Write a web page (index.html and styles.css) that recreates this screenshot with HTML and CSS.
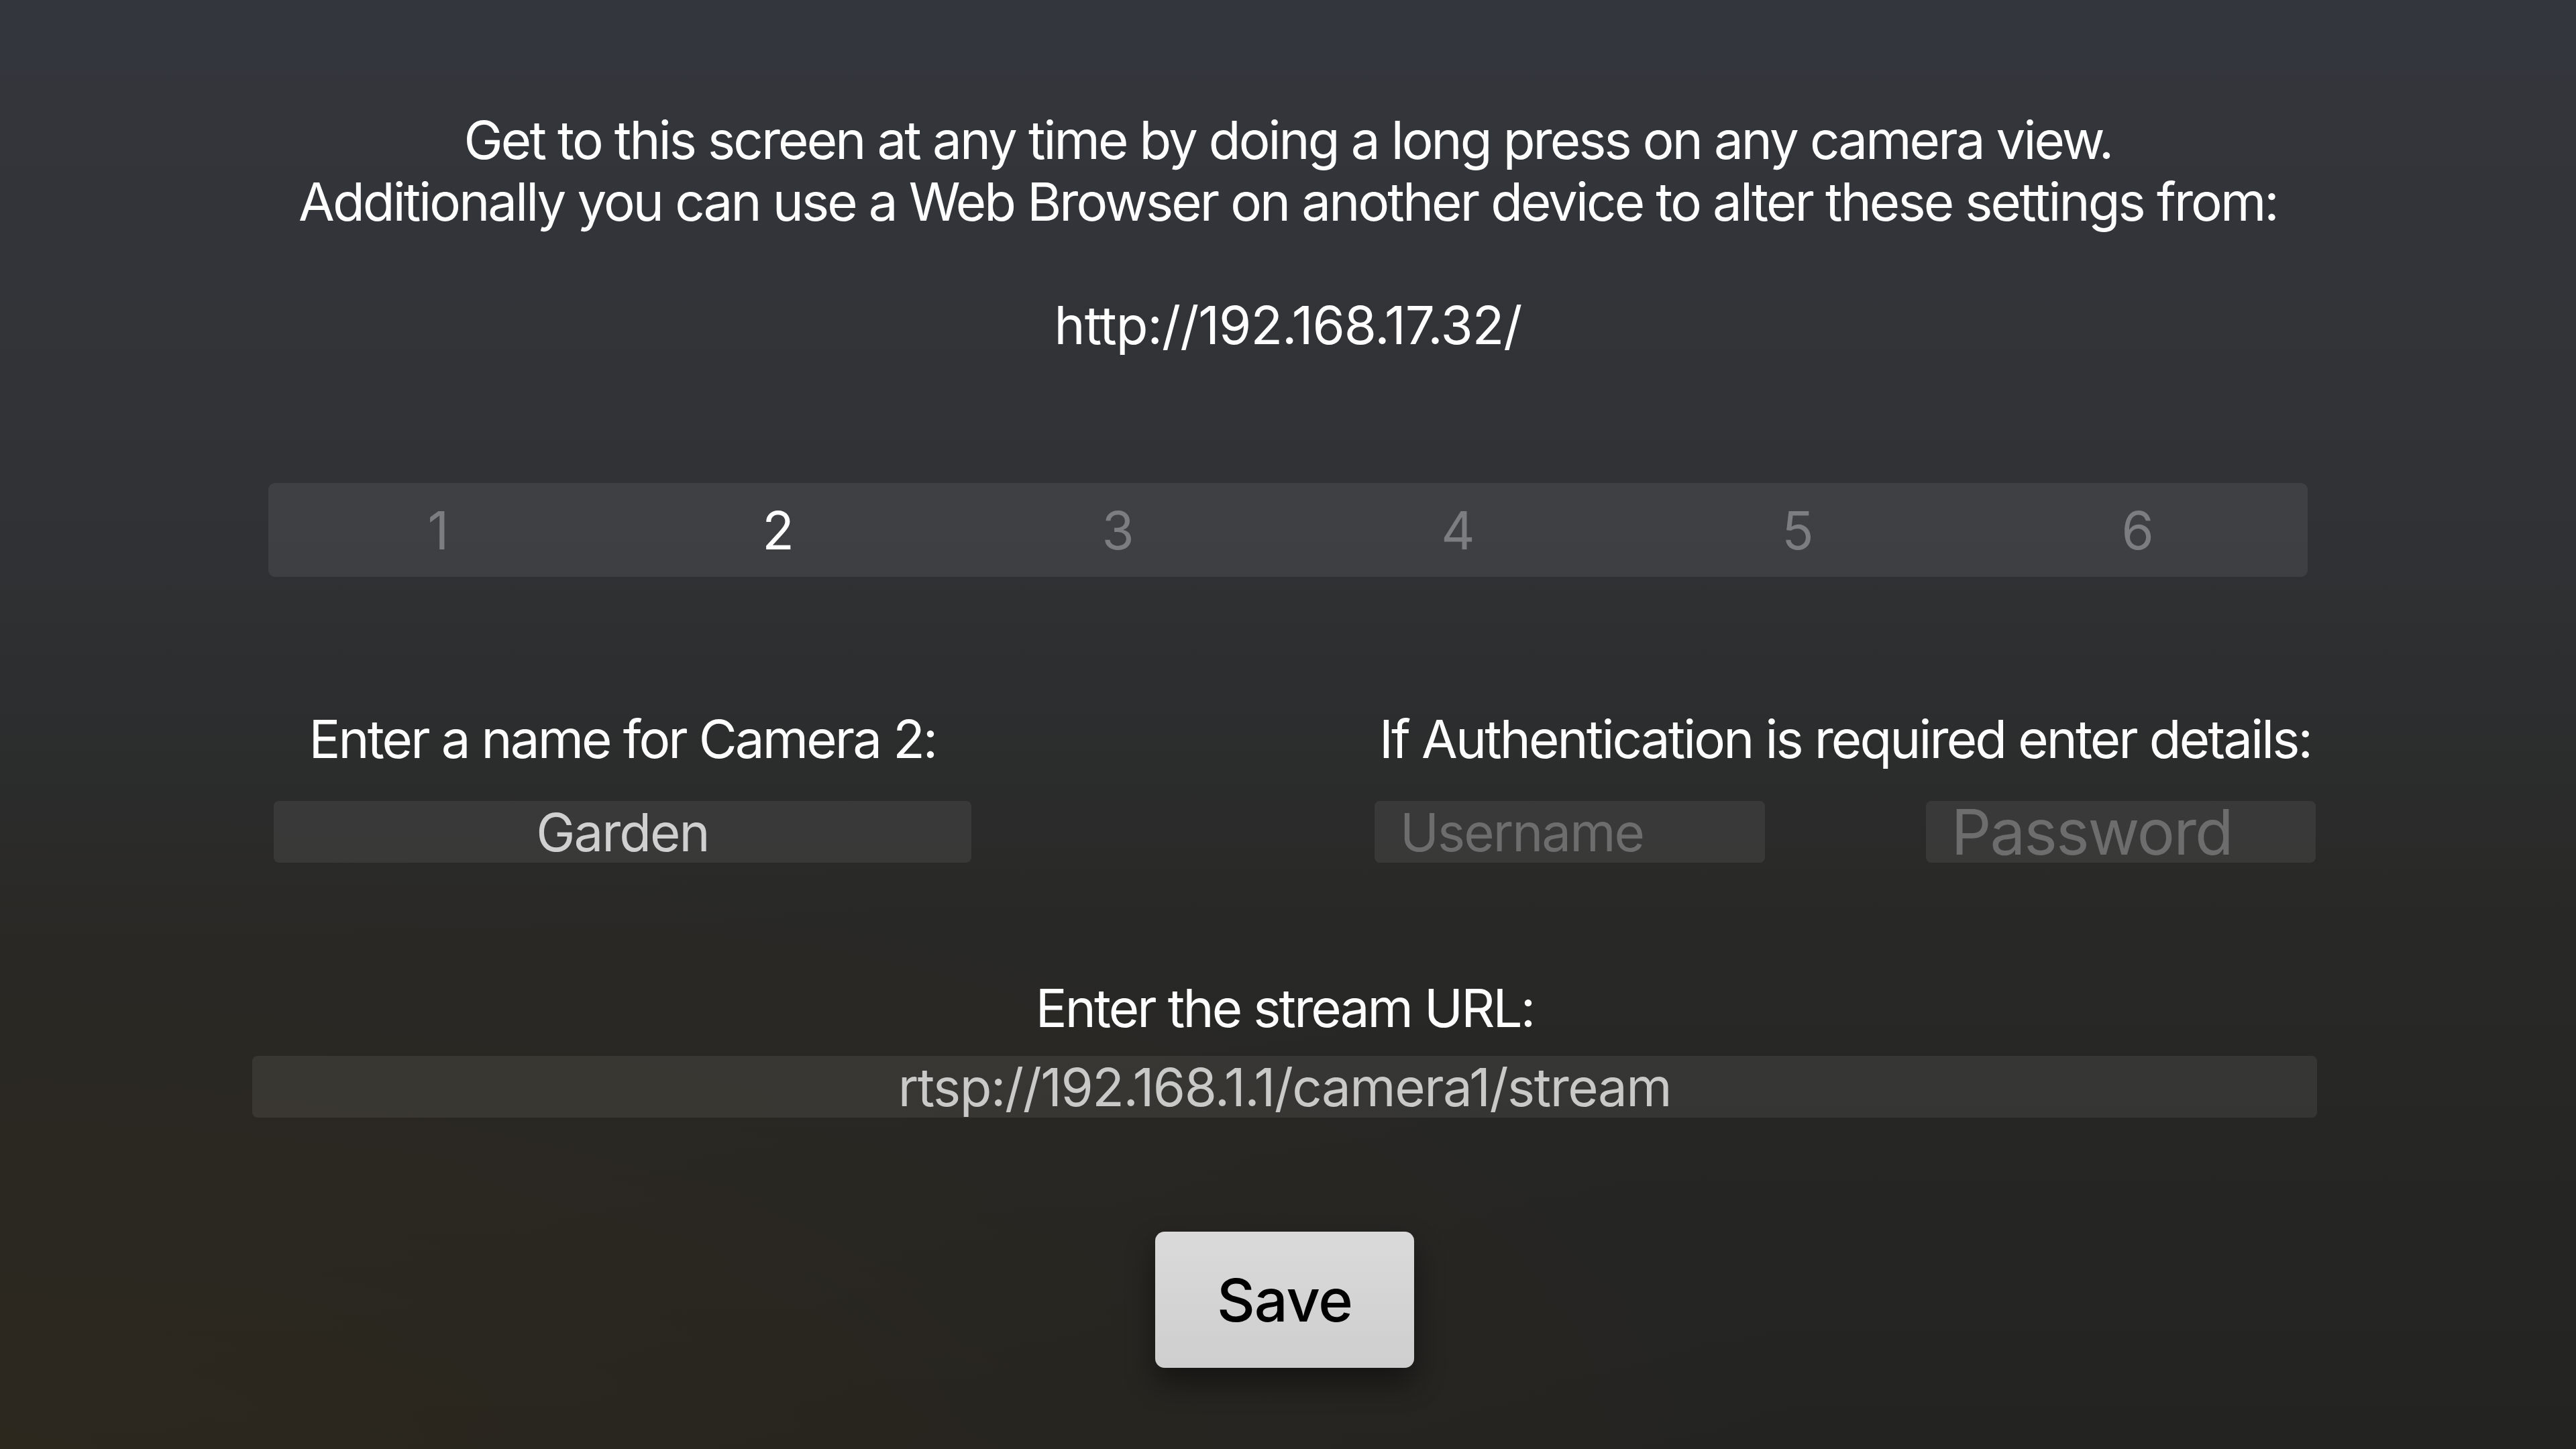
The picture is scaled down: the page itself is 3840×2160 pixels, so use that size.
FILE: index.html
```html
<!DOCTYPE html>
<html lang="en">
<head>
    <meta charset="UTF-8">
    <meta name="viewport" content="width=device-width, initial-scale=1.0">
    <title>Camera Settings</title>
    <link rel="stylesheet" href="styles.css">
</head>
<body>
    <div class="intro">
        <p>Get to this screen at any time by doing a long press on any camera view.<br>
        Additionally you can use a Web Browser on another device to alter these settings from:</p>
        <p class="address">http://192.168.17.32/</p>
    </div>

    <div class="tabs">
        <span class="tab">1</span>
        <span class="tab selected">2</span>
        <span class="tab">3</span>
        <span class="tab">4</span>
        <span class="tab">5</span>
        <span class="tab">6</span>
    </div>

    <div class="form">
        <div class="row">
            <div class="nameCol">
                <p class="label">Enter a name for Camera 2:</p>
                <input class="field" type="text" value="Garden">
            </div>
            <div class="authCol">
                <p class="label">If Authentication is required enter details:</p>
                <div class="authFields">
                    <input class="field left" type="text" placeholder="Username">
                    <input class="field left big" type="password" placeholder="Password">
                </div>
            </div>
        </div>

        <p class="label streamLabel">Enter the stream URL:</p>
        <input class="field streamField" type="text" value="rtsp://192.168.1.1/camera1/stream">

        <button class="save">Save</button>
    </div>
</body>
</html>
```

FILE: styles.css
```css
* {
    box-sizing: border-box;
}

html, body {
    margin: 0;
}

body {
    min-height: 2160px;
    font-family: Inter, "Noto Sans", sans-serif;
    color: #fff;
    background:
        radial-gradient(ellipse 70% 45% at 0% 100%, rgba(58, 46, 24, 0.4), transparent),
        linear-gradient(180deg, #33363c 0%, #303235 35%, #282826 65%, #232321 100%);
}

.intro {
    padding-top: 163px;
    text-align: center;
    font-size: 78px;
    line-height: 92px;
    letter-spacing: -2.9px;
}

.intro p {
    margin: 0;
}

.intro .address {
    margin-top: 92px;
    letter-spacing: -1px;
}

.tabs {
    display: flex;
    width: 3040px;
    height: 140px;
    margin: 189px auto 0;
    border-radius: 10px;
    background: rgba(255, 255, 255, 0.07);
}

.tab {
    flex: 1;
    display: flex;
    align-items: center;
    justify-content: center;
    font-size: 78px;
    color: #7b7d81;
}

.tab.selected {
    color: #fff;
}

.form {
    width: 3078px;
    margin: 196px 0 0 376px;
}

.row {
    display: flex;
}

.nameCol {
    width: 1040px;
    margin-left: 32px;
}

.authCol {
    width: 1403px;
    margin-left: auto;
    margin-right: 2px;
}

.label {
    margin: 0;
    font-size: 78px;
    line-height: 92px;
    text-align: center;
    letter-spacing: -2.9px;
    white-space: nowrap;
}

.field {
    display: block;
    width: 100%;
    height: 92px;
    margin-top: 46px;
    padding: 0 38px;
    border: none;
    border-radius: 8px;
    outline: none;
    background: rgba(255, 255, 255, 0.07);
    font-family: inherit;
    font-size: 78px;
    letter-spacing: -2px;
    color: #d0d0d0;
    text-align: center;
}

.field::placeholder {
    color: #6d6d6d;
}

.field.left {
    text-align: left;
}

.field.big {
    font-size: 94px;
}

.authFields {
    display: flex;
    gap: 240px;
}

.authFields .field {
    flex: 1;
    min-width: 0;
}

.streamLabel {
    margin-top: 171px;
}

.streamField {
    margin-top: 25px;
    letter-spacing: -1.5px;
    color: #c9c9c7;
}

.save {
    display: block;
    width: 386px;
    height: 203px;
    margin: 170px auto 0;
    border: none;
    border-radius: 14px;
    background: linear-gradient(180deg, #dadada, #cecece);
    box-shadow: 0 22px 44px rgba(0, 0, 0, 0.45);
    font-family: inherit;
    font-size: 88px;
    font-weight: 500;
    letter-spacing: -1px;
    color: #000;
}
```
